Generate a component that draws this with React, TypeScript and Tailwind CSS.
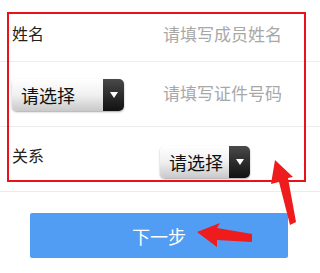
import React from "react";

function Select({ width }: { width: number }) {
  return (
    <div
      className="flex h-[32px] rounded-[5px] overflow-hidden shadow-[0_1px_2px_rgba(0,0,0,0.35)]"
      style={{ width }}
    >
      <div className="flex-1 flex items-center pl-[9px] bg-gradient-to-b from-[#ffffff] via-[#f0f0f0] to-[#c9c9c9] text-[18px] text-[#111] leading-none">
        请选择
      </div>
      <div className="w-[21px] flex items-center justify-center bg-gradient-to-b from-[#4a4a4a] to-[#121212]">
        <svg width="8" height="6" viewBox="0 0 8 6">
          <polygon points="0,0 8,0 4,6" fill="#fff" />
        </svg>
      </div>
    </div>
  );
}

export default function App() {
  return (
    <div
      className="relative w-[320px] h-[273px] bg-white overflow-hidden"
      style={{ fontFamily: '"Noto Sans CJK SC", "Noto Sans", sans-serif' }}
    >
      <div className="flex flex-col">
        <div className="h-[62px] flex items-center border-b border-[#ececec]">
          <div className="w-[163px] pl-[12px] text-[16px] text-[#222] leading-none pt-[4px]">姓名</div>
          <div className="text-[17px] text-[#a8a8a8] leading-none pt-[5px]">请填写成员姓名</div>
        </div>
        <div className="h-[65px] flex items-center border-b border-[#ececec]">
          <div className="w-[163px] pl-[12px] pt-[2px]">
            <Select width={112} />
          </div>
          <div className="text-[17px] text-[#a8a8a8] leading-none pb-[3px]">请填写证件号码</div>
        </div>
        <div className="h-[65px] flex items-center border-b border-[#ececec]">
          <div className="w-[160px] pl-[12px] text-[16px] text-[#222] leading-none pb-[9px]">关系</div>
          <div className="pt-[6px]">
            <Select width={90} />
          </div>
        </div>
        <div className="flex justify-center pt-[21px]">
          <div className="w-[258px] h-[45px] ml-[-2px] rounded-[2px] bg-[#519df4] flex items-center justify-center text-white text-[18px] leading-none">
            下一步
          </div>
        </div>
      </div>

      <div className="absolute left-[7px] top-[12px] w-[299px] h-[170px] border-2 border-[#e8121a]" />

      <svg className="absolute left-0 top-0" width="320" height="273" viewBox="0 0 320 273">
        <polygon points="275,160 293,177 288,178 296,222 290,225 279,182 271,184" fill="#ee1c1c" />
        <polygon points="197,232 220,223 217,228 252,234 252,242 217,240 217,247" fill="#ee1c1c" />
      </svg>
    </div>
  );
}
